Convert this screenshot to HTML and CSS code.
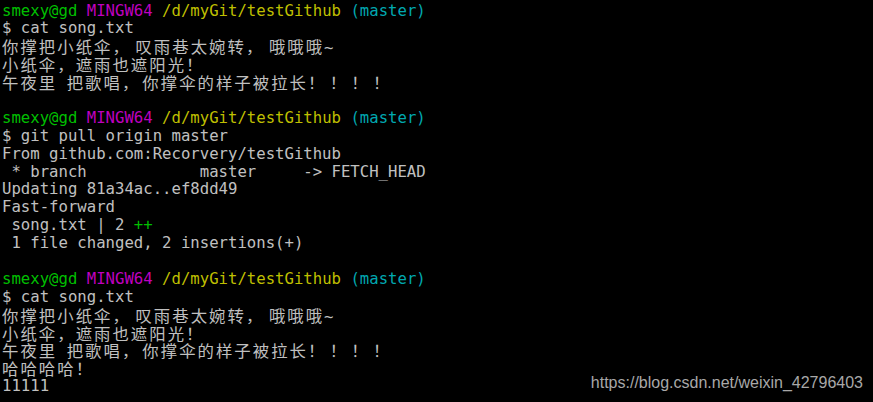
FILE: index.html
```html
<!DOCTYPE html>
<html lang="zh-CN">
<head>
<meta charset="utf-8">
<title>Git Bash</title>
<link rel="stylesheet" href="styles.css">
</head>
<body>
<div class="term">
  <div class="screen">
    <div class="row"><span class="g">smexy@gd</span> <span class="m">MINGW64</span> <span class="y">/d/myGit/testGithub</span> <span class="c">(master)</span></div>
    <div class="row">$ cat song.txt</div>
    <div class="row"><span class="cjk">你撑把小纸伞<span class="gap">，</span>叹雨巷太婉转<span class="gap">，</span>哦哦哦</span>~</div>
    <div class="row"><span class="cjk">小纸伞，遮雨也遮阳光！</span></div>
    <div class="row"><span class="cjk">午夜里</span> <span class="cjk">把歌唱<span class="gap-s">，</span>你撑伞的样子被拉长<span class="bang">！！！！</span></span></div>
    <div class="row"></div>
    <div class="row"><span class="g">smexy@gd</span> <span class="m">MINGW64</span> <span class="y">/d/myGit/testGithub</span> <span class="c">(master)</span></div>
    <div class="row">$ git pull origin master</div>
    <div class="row">From github.com:Recorvery/testGithub</div>
    <div class="row"> * branch            master     -&gt; FETCH_HEAD</div>
    <div class="row">Updating 81a34ac..ef8dd49</div>
    <div class="row">Fast-forward</div>
    <div class="row"> song.txt | 2 <span class="g">++</span></div>
    <div class="row"> 1 file changed, 2 insertions(+)</div>
    <div class="row"></div>
    <div class="row"><span class="g">smexy@gd</span> <span class="m">MINGW64</span> <span class="y">/d/myGit/testGithub</span> <span class="c">(master)</span></div>
    <div class="row">$ cat song.txt</div>
    <div class="row"><span class="cjk">你撑把小纸伞<span class="gap">，</span>叹雨巷太婉转<span class="gap">，</span>哦哦哦</span>~</div>
    <div class="row"><span class="cjk">小纸伞，遮雨也遮阳光！</span></div>
    <div class="row"><span class="cjk">午夜里</span> <span class="cjk">把歌唱<span class="gap-s">，</span>你撑伞的样子被拉长<span class="bang">！！！！</span></span></div>
    <div class="row"><span class="cjk">哈哈哈哈！</span></div>
    <div class="row">11111</div>
  </div>
  <div class="mark">https://blog.csdn.net/weixin_42796403</div>
</div>
</body>
</html>
```

FILE: styles.css
```css
html, body {
  margin: 0;
  padding: 0;
  background: #000;
}
.term {
  position: relative;
  width: 873px;
  height: 402px;
  background: #000;
  overflow: hidden;
}
.screen {
  padding: 2.5px 0 0 2px;
  font-family: "DejaVu Sans Mono", monospace;
  font-size: 15.3px;
  color: #c0c0c0;
  transform: scaleX(1.0222);
  transform-origin: 0 0;
}
.row {
  height: 17.9px;
  line-height: 17.9px;
  white-space: pre;
}
.cjk {
  font-family: "Noto Sans CJK SC", sans-serif;
  font-size: 16px;
  letter-spacing: 2px;
  vertical-align: top;
}
.gap {
  margin-right: 4.5px;
}
.gap-s {
  margin-right: 2px;
}
.bang {
  letter-spacing: 5.2px;
}
.g { color: #00bf00; }
.m { color: #bf00bf; }
.y { color: #bfbf00; }
.c { color: #00a8b0; }
.mark {
  position: absolute;
  right: 10px;
  bottom: 10px;
  font-family: "Liberation Sans", Arial, sans-serif;
  font-size: 16px;
  color: #a8a8a8;
}
```
